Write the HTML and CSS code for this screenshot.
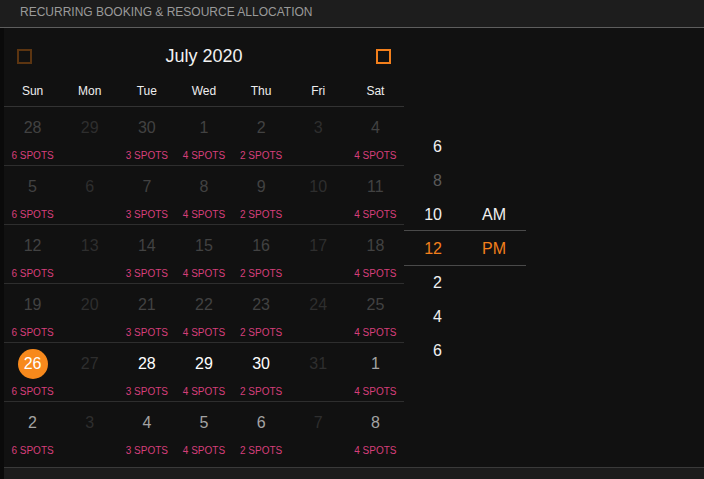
FILE: index.html
```html
<!DOCTYPE html>
<html lang="en">

<head>
    <meta charset="UTF-8">
    <meta name="viewport" content="width=device-width, initial-scale=1.0">
    <title>Recurring Booking</title>
    <link rel="stylesheet" href="styles.css">
</head>

<body>
    <div class="topbar">RECURRING BOOKING &amp; RESOURCE ALLOCATION</div>

    <div class="main">
        <div class="calendar">
            <div class="cal-head">
                <span class="nav prev"></span>
                <span class="month">July 2020</span>
                <span class="nav next"></span>
            </div>
            <div class="weekdays">
                <span>Sun</span><span>Mon</span><span>Tue</span><span>Wed</span><span>Thu</span><span>Fri</span><span>Sat</span>
            </div>

            <div class="week">
                <div class="day past"><span class="num">28</span><span class="spots">6 spots</span></div>
                <div class="day off"><span class="num">29</span></div>
                <div class="day past"><span class="num">30</span><span class="spots">3 spots</span></div>
                <div class="day past"><span class="num">1</span><span class="spots">4 spots</span></div>
                <div class="day past"><span class="num">2</span><span class="spots">2 spots</span></div>
                <div class="day off"><span class="num">3</span></div>
                <div class="day past"><span class="num">4</span><span class="spots">4 spots</span></div>
            </div>
            <div class="week">
                <div class="day past"><span class="num">5</span><span class="spots">6 spots</span></div>
                <div class="day off"><span class="num">6</span></div>
                <div class="day past"><span class="num">7</span><span class="spots">3 spots</span></div>
                <div class="day past"><span class="num">8</span><span class="spots">4 spots</span></div>
                <div class="day past"><span class="num">9</span><span class="spots">2 spots</span></div>
                <div class="day off"><span class="num">10</span></div>
                <div class="day past"><span class="num">11</span><span class="spots">4 spots</span></div>
            </div>
            <div class="week">
                <div class="day past"><span class="num">12</span><span class="spots">6 spots</span></div>
                <div class="day off"><span class="num">13</span></div>
                <div class="day past"><span class="num">14</span><span class="spots">3 spots</span></div>
                <div class="day past"><span class="num">15</span><span class="spots">4 spots</span></div>
                <div class="day past"><span class="num">16</span><span class="spots">2 spots</span></div>
                <div class="day off"><span class="num">17</span></div>
                <div class="day past"><span class="num">18</span><span class="spots">4 spots</span></div>
            </div>
            <div class="week">
                <div class="day past"><span class="num">19</span><span class="spots">6 spots</span></div>
                <div class="day off"><span class="num">20</span></div>
                <div class="day past"><span class="num">21</span><span class="spots">3 spots</span></div>
                <div class="day past"><span class="num">22</span><span class="spots">4 spots</span></div>
                <div class="day past"><span class="num">23</span><span class="spots">2 spots</span></div>
                <div class="day off"><span class="num">24</span></div>
                <div class="day past"><span class="num">25</span><span class="spots">4 spots</span></div>
            </div>
            <div class="week">
                <div class="day selected"><span class="num">26</span><span class="spots">6 spots</span></div>
                <div class="day off"><span class="num">27</span></div>
                <div class="day open"><span class="num">28</span><span class="spots">3 spots</span></div>
                <div class="day open"><span class="num">29</span><span class="spots">4 spots</span></div>
                <div class="day open"><span class="num">30</span><span class="spots">2 spots</span></div>
                <div class="day off"><span class="num">31</span></div>
                <div class="day next-month"><span class="num">1</span><span class="spots">4 spots</span></div>
            </div>
            <div class="week last">
                <div class="day next-month"><span class="num">2</span><span class="spots">6 spots</span></div>
                <div class="day off"><span class="num">3</span></div>
                <div class="day next-month"><span class="num">4</span><span class="spots">3 spots</span></div>
                <div class="day next-month"><span class="num">5</span><span class="spots">4 spots</span></div>
                <div class="day next-month"><span class="num">6</span><span class="spots">2 spots</span></div>
                <div class="day off"><span class="num">7</span></div>
                <div class="day next-month"><span class="num">8</span><span class="spots">4 spots</span></div>
            </div>
        </div>

        <div class="timepicker">
            <div class="slot"><span class="hour">6</span><span class="ampm"></span></div>
            <div class="slot faded"><span class="hour">8</span><span class="ampm"></span></div>
            <div class="slot"><span class="hour">10</span><span class="ampm">AM</span></div>
            <div class="slot active"><span class="hour">12</span><span class="ampm">PM</span></div>
            <div class="slot"><span class="hour">2</span><span class="ampm"></span></div>
            <div class="slot"><span class="hour">4</span><span class="ampm"></span></div>
            <div class="slot"><span class="hour">6</span><span class="ampm"></span></div>
        </div>
    </div>

    <div class="bottombar"></div>
</body>

</html>
```

FILE: styles.css
```css
body {
    margin: 0;
    padding: 0;
    height: 479px;
    overflow: hidden;
    background-color: #0a0a0a;
    font-family: "Liberation Sans", Arial, sans-serif;
    color: #eee;
}

.topbar {
    height: 27px;
    line-height: 25px;
    padding-left: 20px;
    background-color: #1d1d1d;
    border-bottom: 1px solid #5e5e5e;
    color: #9a9a9a;
    font-size: 12px;
}

.main {
    display: flex;
    margin-left: 4px;
    height: 439px;
    background-color: #111;
}

.calendar {
    width: 400px;
}

.cal-head {
    display: flex;
    align-items: center;
    justify-content: space-between;
    height: 56px;
    padding: 0 13px;
}

.nav {
    width: 11px;
    height: 11px;
    border: 2px solid #5c3511;
}

.nav.next {
    border-color: #f27f1c;
}

.month {
    font-size: 18px;
    color: #f2f2f2;
}

.weekdays {
    display: grid;
    grid-template-columns: repeat(7, 1fr);
    line-height: 14px;
    padding-bottom: 8px;
    border-bottom: 1px solid #333;
    font-size: 12px;
    text-align: center;
    color: #eee;
}

.week {
    display: grid;
    grid-template-columns: repeat(7, 1fr);
    height: 58px;
    border-bottom: 1px solid #2e2e2e;
}

.week.last {
    border-bottom: none;
}

.day {
    display: flex;
    flex-direction: column;
    align-items: center;
}

.num {
    width: 30px;
    height: 30px;
    margin-top: 6px;
    line-height: 30px;
    border-radius: 50%;
    text-align: center;
    font-size: 16px;
}

.spots {
    margin-top: 7px;
    line-height: 12px;
    font-size: 10px;
    text-transform: uppercase;
    color: #d63f7b;
}

.day.past .num {
    color: #424242;
}

.day.off .num {
    color: #2e2e2e;
}

.day.open .num {
    color: #fff;
}

.day.next-month .num {
    color: #a3a3a3;
}

.day.selected .num {
    background-color: #f7891c;
    color: #fff;
}

.timepicker {
    width: 122px;
    margin-top: 101px;
    align-self: flex-start;
}

.slot {
    display: flex;
    height: 34px;
    box-sizing: border-box;
    padding-top: 2px;
    align-items: center;
    font-size: 16px;
    color: #f0f0f0;
}

.slot .hour {
    width: 38px;
    text-align: right;
}

.slot .ampm {
    margin-left: 40px;
}

.slot.faded {
    color: #5a5a5a;
}

.slot.active {
    height: 36px;
    margin: -1px 0;
    border-top: 1px solid #4a4a4a;
    border-bottom: 1px solid #4a4a4a;
    color: #f27f1c;
}

.bottombar {
    height: 11px;
    margin-left: 4px;
    background-color: #1c1c1c;
    border-top: 1px solid #3a3a3a;
}
```
